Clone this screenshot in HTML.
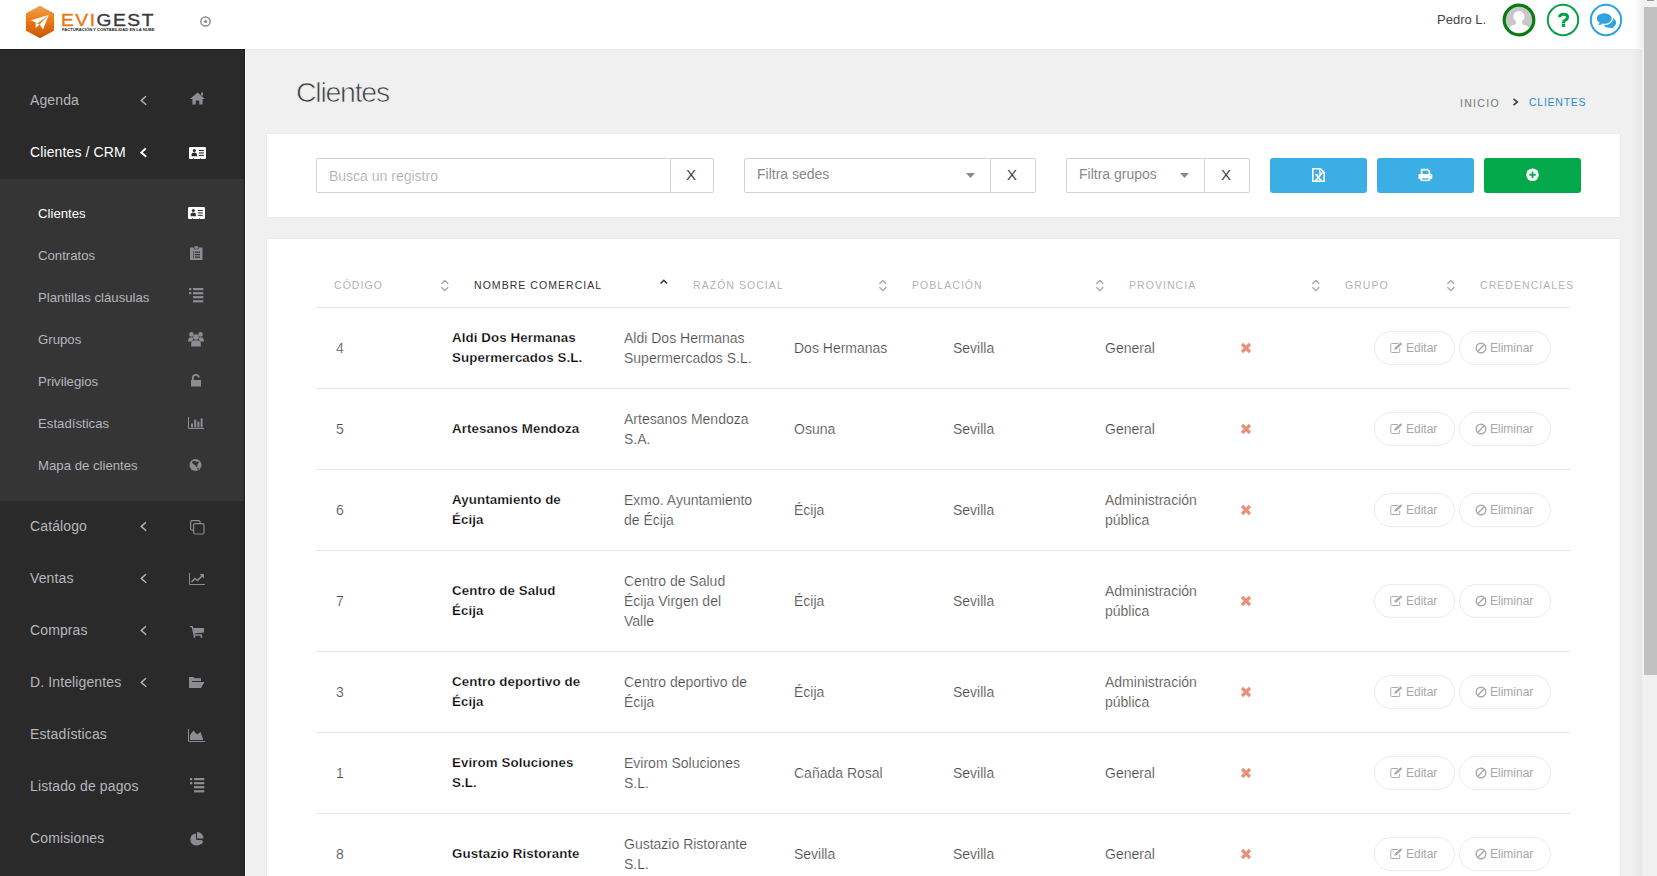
<!DOCTYPE html>
<html><head><meta charset="utf-8">
<style>
*{box-sizing:border-box;margin:0;padding:0}
html,body{width:1657px;height:876px;overflow:hidden;background:#f0f0f0;font-family:"Liberation Sans",sans-serif}
.abs{position:absolute;display:block}
.t{position:absolute;white-space:nowrap}
</style></head><body>

<div class="abs" style="left:246px;top:49px;width:1396px;height:827px;background:#f0f0f0"></div>
<div class="abs" style="left:246px;top:49px;width:1396px;height:1px;background:#e8e8e8"></div>
<div class="abs" style="left:0;top:0;width:1642px;height:49px;background:#fff"></div>
<svg class="abs" style="left:25px;top:5px" width="31" height="34" viewBox="0 0 31 34">
<defs><linearGradient id="lg" x1="0" y1="0" x2="0" y2="1"><stop offset="0" stop-color="#eea050"/><stop offset="0.25" stop-color="#ec8a28"/><stop offset="0.55" stop-color="#e57510"/><stop offset="1" stop-color="#c85808"/></linearGradient></defs>
<path d="M15 2 L28 9 L28 25 L15 32 L2 25 L2 9 Z" fill="url(#lg)" stroke="url(#lg)" stroke-width="2.2" stroke-linejoin="round"/>
<path d="M6.1 15.3 L23.9 9.8 L18 24.4 L14.6 19.6 Z" fill="#fff"/><path d="M10.6 18 L14.6 19.6 L10.8 23 Z" fill="#fff"/><path d="M23.9 9.8 L12.3 18.4 L14.6 19.6 Z" fill="#e88428"/>
</svg>
<div class="t" style="left:61px;top:10px;font-size:16.5px;letter-spacing:1.3px;line-height:20px;transform:scaleX(1.165);transform-origin:0 0;color:#e8780e;-webkit-text-stroke:0.35px #e8780e">EVI<span style="color:#3a3a40;-webkit-text-stroke:0.35px #3a3a40">GEST</span></div>
<div class="t" style="left:62px;top:27.3px;font-size:4.15px;font-weight:bold;line-height:6px;color:#222">FACTURACIÓN Y CONTABILIDAD EN LA NUBE</div>
<svg class="abs" style="left:199px;top:15px" width="13" height="13" viewBox="0 0 13 13"><circle cx="6.5" cy="6.5" r="4.6" fill="none" stroke="#8a8a8a" stroke-width="1.5"/><circle cx="6.5" cy="6.5" r="1.6" fill="#8a8a8a"/></svg>
<div class="t" style="left:1437px;top:12px;font-size:13px;line-height:16px;color:#444">Pedro L.</div>
<svg class="abs" style="left:1502px;top:3px" width="34" height="34" viewBox="0 0 34 34"><defs><clipPath id="cp"><circle cx="17" cy="17" r="14"/></clipPath></defs>
<circle cx="17" cy="17" r="14.5" fill="#c8c8c8"/>
<g clip-path="url(#cp)"><circle cx="17" cy="13.4" r="5.5" fill="#fff"/><path d="M14.2 17.5 L19.8 17.5 L20.5 21.5 Q27 22.5 29 28 L29 34 L5 34 L5 28 Q7 22.5 13.5 21.5 Z" fill="#fff"/></g>
<circle cx="17" cy="17" r="14.8" fill="none" stroke="#0a7a12" stroke-width="3.2"/></svg>
<svg class="abs" style="left:1546px;top:3px" width="34" height="34" viewBox="0 0 34 34"><circle cx="17" cy="17" r="15.2" fill="#fff" stroke="#08a04a" stroke-width="2"/>
<path d="M13.7 14.3 Q13.7 11.3 17.6 11.3 Q21.5 11.3 21.5 14 Q21.5 16 19.3 17.1 Q17.6 17.9 17.6 19.4 L17.6 20" fill="none" stroke="#08a04a" stroke-width="3.1"/><rect x="15.9" y="20.6" width="3.3" height="3.3" fill="#08a04a"/></svg>
<svg class="abs" style="left:1589px;top:3px" width="34" height="34" viewBox="0 0 34 34"><circle cx="17" cy="17" r="15.2" fill="#fff" stroke="#2ea3e0" stroke-width="2"/>
<ellipse cx="20.6" cy="19.6" rx="6.6" ry="5.2" fill="#2ea3e0"/><path d="M22.5 23 L25.6 25.4 L19.5 24.2 Z" fill="#2ea3e0"/><ellipse cx="15.2" cy="15.5" rx="8.2" ry="5.9" fill="#2ea3e0" stroke="#fff" stroke-width="1.3"/><path d="M9 22.3 L10.9 19.6 L14.3 21 Z" fill="#2ea3e0"/></svg>
<div class="abs" style="left:0;top:49px;width:245px;height:827px;background:#2a2a2a"></div>
<div class="abs" style="left:0;top:49px;width:245px;height:1px;background:#1c1c1c"></div>
<div class="abs" style="left:0;top:179px;width:244px;height:322px;background:#353535"></div>
<div class="abs" style="left:244px;top:49px;width:1px;height:827px;background:rgba(0,0,0,0.3)"></div>
<div class="abs" style="left:245px;top:49px;width:1px;height:827px;background:#fcfcfc"></div>
<div class="t" style="left:30px;top:92px;font-size:14px;letter-spacing:0.12px;line-height:16px;color:#b6b6be">Agenda</div>
<svg class="abs" style="left:140px;top:95px" width="8" height="11" viewBox="0 0 8 11" ><path d="M5.9 1.2 L1.3 5.5 L6.2 9.7" fill="none" stroke="#b4b4bc" stroke-width="1.5"/></svg>
<svg class="abs" style="left:190px;top:92px" width="15" height="13" viewBox="0 0 15 13" ><path d="M7.5 0.5 L15 7 L12.6 7 L12.6 12.5 L9.2 12.5 L9.2 8.5 L5.8 8.5 L5.8 12.5 L2.4 12.5 L2.4 7 L0 7 Z" fill="#8c8c94"/><rect x="11" y="0.5" width="2" height="3" fill="#8c8c94"/></svg>
<div class="t" style="left:30px;top:144px;font-size:14px;letter-spacing:0.12px;line-height:16px;color:#fff">Clientes / CRM</div>
<svg class="abs" style="left:140px;top:147px" width="8" height="11" viewBox="0 0 8 11" ><path d="M5.9 1.2 L1.3 5.5 L6.2 9.7" fill="none" stroke="#fff" stroke-width="1.9"/></svg>
<svg class="abs" style="left:188.5px;top:147px" width="17" height="12" viewBox="0 0 17 12" ><rect x="0" y="0" width="17" height="12" rx="1.2" fill="#fff"/><circle cx="5.3" cy="3.6" r="1.5" fill="#2a2a2a"/><path d="M2.6 9.3 L2.6 7.4 Q2.6 5.6 5.3 5.6 Q8 5.6 8 7.4 L8 9.3 Z" fill="#2a2a2a"/><rect x="9.8" y="3" width="5" height="1.1" fill="#2a2a2a"/><rect x="9.8" y="5.4" width="5" height="1.1" fill="#2a2a2a"/><rect x="9.8" y="7.8" width="5" height="1.1" fill="#2a2a2a"/><rect x="4" y="11.2" width="0.8" height="0.8" fill="#2a2a2a"/><rect x="11" y="11.2" width="0.8" height="0.8" fill="#2a2a2a"/></svg>
<div class="t" style="left:38px;top:206px;font-size:13.2px;line-height:16px;color:#fff">Clientes</div>
<div class="t" style="left:38px;top:248px;font-size:13.2px;line-height:16px;color:#b6b6be">Contratos</div>
<div class="t" style="left:38px;top:290px;font-size:13.2px;line-height:16px;color:#b6b6be">Plantillas cláusulas</div>
<div class="t" style="left:38px;top:332px;font-size:13.2px;line-height:16px;color:#b6b6be">Grupos</div>
<div class="t" style="left:38px;top:374px;font-size:13.2px;line-height:16px;color:#b6b6be">Privilegios</div>
<div class="t" style="left:38px;top:416px;font-size:13.2px;line-height:16px;color:#b6b6be">Estadísticas</div>
<div class="t" style="left:38px;top:458px;font-size:13.2px;line-height:16px;color:#b6b6be">Mapa de clientes</div>
<svg class="abs" style="left:187.5px;top:207px" width="17" height="12" viewBox="0 0 17 12" ><rect x="0" y="0" width="17" height="12" rx="1.2" fill="#fff"/><circle cx="5.3" cy="3.6" r="1.5" fill="#353535"/><path d="M2.6 9.3 L2.6 7.4 Q2.6 5.6 5.3 5.6 Q8 5.6 8 7.4 L8 9.3 Z" fill="#353535"/><rect x="9.8" y="3" width="5" height="1.1" fill="#353535"/><rect x="9.8" y="5.4" width="5" height="1.1" fill="#353535"/><rect x="9.8" y="7.8" width="5" height="1.1" fill="#353535"/><rect x="4" y="11.2" width="0.8" height="0.8" fill="#353535"/><rect x="11" y="11.2" width="0.8" height="0.8" fill="#353535"/></svg>
<svg class="abs" style="left:190px;top:246px" width="13" height="14" viewBox="0 0 13 14" ><rect x="0" y="1.5" width="12.5" height="12.5" rx="0.5" fill="#8c8c94"/><rect x="4" y="0" width="4.5" height="3" fill="#8c8c94" stroke="#353535" stroke-width="0.6"/><rect x="3" y="5.5" width="1.3" height="1.3" fill="#353535"/><rect x="5" y="5.5" width="5" height="1.3" fill="#353535"/><rect x="3" y="8" width="1.3" height="1.3" fill="#353535"/><rect x="5" y="8" width="5" height="1.3" fill="#353535"/><rect x="3" y="10.5" width="1.3" height="1.3" fill="#353535"/><rect x="5" y="10.5" width="5" height="1.3" fill="#353535"/></svg>
<svg class="abs" style="left:189px;top:288px" width="15" height="15" viewBox="0 0 15 15" ><rect x="0" y="0" width="2.3" height="2.2" fill="#8c8c94"/><rect x="0" y="4" width="2.3" height="2.2" fill="#8c8c94"/><rect x="4" y="0" width="10.3" height="2.2" fill="#8c8c94"/><rect x="4" y="4.1" width="10.3" height="2.2" fill="#8c8c94"/><rect x="4" y="8.1" width="10.3" height="2.2" fill="#8c8c94"/><rect x="4" y="12.2" width="10.3" height="2.2" fill="#8c8c94"/></svg>
<svg class="abs" style="left:188px;top:332px" width="16" height="15" viewBox="0 0 16 15" ><circle cx="3.4" cy="2.4" r="2.3" fill="#8c8c94"/><circle cx="12.6" cy="2.4" r="2.3" fill="#8c8c94"/><path d="M0 9 Q0 5.2 3.4 5.2 Q5 5.2 5.5 6.5 L4 9.5 L0 9.5Z" fill="#8c8c94"/><path d="M16 9 Q16 5.2 12.6 5.2 Q11 5.2 10.5 6.5 L12 9.5 L16 9.5Z" fill="#8c8c94"/><circle cx="8" cy="5" r="2.8" fill="#8c8c94"/><path d="M3.2 14.5 L3.2 11.5 Q3.2 8.3 8 8.3 Q12.8 8.3 12.8 11.5 L12.8 14.5 Z" fill="#8c8c94"/></svg>
<svg class="abs" style="left:191px;top:374px" width="11" height="13" viewBox="0 0 11 13" ><path d="M1.8 6 L1.8 3.8 Q1.8 0.9 4.8 0.9 Q7.8 0.9 7.8 3.5" fill="none" stroke="#8c8c94" stroke-width="1.8"/><rect x="0" y="6" width="10" height="6.5" fill="#8c8c94"/></svg>
<svg class="abs" style="left:188px;top:417px" width="16" height="12" viewBox="0 0 16 12" ><path d="M0.5 0 L0.5 11.5 L16 11.5" fill="none" stroke="#8c8c94" stroke-width="1"/><rect x="3" y="6.5" width="2" height="4" fill="#8c8c94"/><rect x="6.2" y="2.5" width="2" height="8" fill="#8c8c94"/><rect x="9.4" y="4.5" width="2" height="6" fill="#8c8c94"/><rect x="12.6" y="1.5" width="2" height="9" fill="#8c8c94"/></svg>
<svg class="abs" style="left:189px;top:459px" width="13" height="12" viewBox="0 0 13 12" ><circle cx="6.5" cy="6" r="6" fill="#8c8c94"/><path d="M2.8 2.9 Q4.8 1.6 6.6 2.3 L7.5 3.1 L8.6 2.3 L10.2 2.9 L8.8 4.8 L7.9 8.6 L6.4 6.6 L4.2 5.1 Z" fill="#353535"/><circle cx="9" cy="9.7" r="0.9" fill="#353535"/></svg>
<div class="t" style="left:30px;top:518px;font-size:14px;letter-spacing:0.12px;line-height:16px;color:#b6b6be">Catálogo</div>
<svg class="abs" style="left:140px;top:521px" width="8" height="11" viewBox="0 0 8 11" ><path d="M5.9 1.2 L1.3 5.5 L6.2 9.7" fill="none" stroke="#b4b4bc" stroke-width="1.5"/></svg>
<svg class="abs" style="left:190px;top:520px" width="15" height="15" viewBox="0 0 15 15" ><rect x="0.6" y="0.6" width="9.5" height="9.5" rx="1.5" fill="none" stroke="#8c8c94" stroke-width="1.2"/><rect x="3.6" y="3.6" width="10.4" height="10.4" rx="1.5" fill="#2a2a2a" stroke="#8c8c94" stroke-width="1.2"/></svg>
<div class="t" style="left:30px;top:570px;font-size:14px;letter-spacing:0.12px;line-height:16px;color:#b6b6be">Ventas</div>
<svg class="abs" style="left:140px;top:573px" width="8" height="11" viewBox="0 0 8 11" ><path d="M5.9 1.2 L1.3 5.5 L6.2 9.7" fill="none" stroke="#b4b4bc" stroke-width="1.5"/></svg>
<svg class="abs" style="left:189px;top:573px" width="16" height="12" viewBox="0 0 16 12" ><path d="M0.5 0 L0.5 11.5 L16 11.5" fill="none" stroke="#8c8c94" stroke-width="1"/><path d="M2.5 9 L6 5.5 L8.5 7.5 L13 3" fill="none" stroke="#8c8c94" stroke-width="1.6"/><path d="M10.5 1 L15 1 L15 5.5 Z" fill="#8c8c94"/></svg>
<div class="t" style="left:30px;top:622px;font-size:14px;letter-spacing:0.12px;line-height:16px;color:#b6b6be">Compras</div>
<svg class="abs" style="left:140px;top:625px" width="8" height="11" viewBox="0 0 8 11" ><path d="M5.9 1.2 L1.3 5.5 L6.2 9.7" fill="none" stroke="#b4b4bc" stroke-width="1.5"/></svg>
<svg class="abs" style="left:190px;top:626px" width="14" height="12" viewBox="0 0 14 12" ><path d="M0 0.7 L2.2 0.7 L4.2 9 L12 9" fill="none" stroke="#8c8c94" stroke-width="1.3"/><path d="M3 2 L14 2 L14 6.5 L4.2 7.5 Z" fill="#8c8c94"/><rect x="3.5" y="9.5" width="1.8" height="2.2" fill="#8c8c94"/><rect x="10.5" y="9.5" width="1.8" height="2.2" fill="#8c8c94"/></svg>
<div class="t" style="left:30px;top:674px;font-size:14px;letter-spacing:0.12px;line-height:16px;color:#b6b6be">D. Inteligentes</div>
<svg class="abs" style="left:140px;top:677px" width="8" height="11" viewBox="0 0 8 11" ><path d="M5.9 1.2 L1.3 5.5 L6.2 9.7" fill="none" stroke="#b4b4bc" stroke-width="1.5"/></svg>
<svg class="abs" style="left:189px;top:677px" width="16" height="12" viewBox="0 0 16 12" ><path d="M0 1 L0 11 L12 11 L15.5 5 L3.5 5 Z" fill="#8c8c94"/><path d="M0 9 L0 0 L4.5 0 L5.5 1.3 L12 1.3 L12 4 L3 4 L0 9 Z" fill="#8c8c94"/></svg>
<div class="t" style="left:30px;top:726px;font-size:14px;letter-spacing:0.12px;line-height:16px;color:#b6b6be">Estadísticas</div>
<svg class="abs" style="left:188px;top:729px" width="17" height="13" viewBox="0 0 17 13" ><path d="M0.5 0 L0.5 12.5 L17 12.5" fill="none" stroke="#8c8c94" stroke-width="1"/><path d="M2 11 L2 6 L5.5 1.5 L9 5.5 L12.5 3 L15 10 L15 11 Z" fill="#8c8c94"/></svg>
<div class="t" style="left:30px;top:778px;font-size:14px;letter-spacing:0.12px;line-height:16px;color:#b6b6be">Listado de pagos</div>
<svg class="abs" style="left:190px;top:778px" width="15" height="15" viewBox="0 0 15 15" ><rect x="0" y="0" width="2.3" height="2.2" fill="#8c8c94"/><rect x="0" y="4" width="2.3" height="2.2" fill="#8c8c94"/><rect x="4" y="0" width="10.3" height="2.2" fill="#8c8c94"/><rect x="4" y="4.1" width="10.3" height="2.2" fill="#8c8c94"/><rect x="4" y="8.1" width="10.3" height="2.2" fill="#8c8c94"/><rect x="4" y="12.2" width="10.3" height="2.2" fill="#8c8c94"/></svg>
<div class="t" style="left:30px;top:830px;font-size:14px;letter-spacing:0.12px;line-height:16px;color:#b6b6be">Comisiones</div>
<svg class="abs" style="left:190px;top:832px" width="14" height="14" viewBox="0 0 14 14" ><path d="M6 1.5 L6 7.8 L12.2 8.2 Q11.8 13.5 6.2 13.6 Q0.5 13.2 0.3 7.6 Q0.6 2 6 1.5 Z" fill="#8c8c94"/><path d="M7 0 Q13 0.2 13.6 6.6 L7 6.6 Z" fill="#8c8c94"/><path d="M7.6 8.6 L13 8.8 Q12.8 11 11.3 12.4 Z" fill="#8c8c94"/></svg>
<div class="t" style="left:296px;top:74px;font-size:28.5px;letter-spacing:-1.25px;line-height:36px;color:#3a3a3a;-webkit-text-stroke:0.7px #f0f0f0">Clientes</div>
<div class="t" style="left:1460px;top:97px;font-size:10.5px;letter-spacing:1.3px;line-height:12px;color:#777">INICIO</div>
<svg class="abs" style="left:1512px;top:98px" width="7" height="8" viewBox="0 0 7 8" ><path d="M1.5 0.8 L5.3 4 L1.5 7.2" fill="none" stroke="#444" stroke-width="1.7"/></svg>
<div class="t" style="left:1529px;top:96px;font-size:10.5px;letter-spacing:0.75px;line-height:12px;color:#2b8ccb">CLIENTES</div>
<div class="abs" style="left:266px;top:133px;width:1355px;height:85px;background:#fff;border:1px solid #ebebeb"></div>
<div class="abs" style="left:266px;top:238px;width:1355px;height:700px;background:#fff;border:1px solid #ebebeb"></div>
<div class="abs" style="left:316px;top:158px;width:355px;height:35px;border:1px solid #d2d2d2;border-radius:2px 0 0 2px;background:#fff"></div>
<div class="abs" style="left:670px;top:158px;width:44px;height:35px;border:1px solid #d2d2d2;border-radius:0 2px 2px 0;background:#fff"></div>
<div class="t" style="left:329px;top:168px;font-size:14px;line-height:16px;color:#aaa;-webkit-text-stroke:0.2px #fff">Busca un registro</div>
<div class="t" style="left:686px;top:167px;font-size:15px;line-height:16px;color:#444">X</div>
<div class="abs" style="left:744px;top:158px;width:247px;height:35px;border:1px solid #d2d2d2;border-radius:2px 0 0 2px;background:#fff"></div>
<div class="abs" style="left:990px;top:158px;width:46px;height:35px;border:1px solid #d2d2d2;border-radius:0 2px 2px 0;background:#fff"></div>
<div class="t" style="left:757px;top:166px;font-size:14px;line-height:16px;color:#888">Filtra sedes</div>
<svg class="abs" style="left:966px;top:173px" width="9" height="5" viewBox="0 0 9 5" ><path d="M0 0 L9 0 L4.5 5 Z" fill="#888"/></svg>
<div class="t" style="left:1007px;top:167px;font-size:15px;line-height:16px;color:#444">X</div>
<div class="abs" style="left:1066px;top:158px;width:139px;height:35px;border:1px solid #d2d2d2;border-radius:2px 0 0 2px;background:#fff"></div>
<div class="abs" style="left:1204px;top:158px;width:46px;height:35px;border:1px solid #d2d2d2;border-radius:0 2px 2px 0;background:#fff"></div>
<div class="t" style="left:1079px;top:166px;font-size:14px;line-height:16px;color:#888">Filtra grupos</div>
<svg class="abs" style="left:1180px;top:173px" width="9" height="5" viewBox="0 0 9 5" ><path d="M0 0 L9 0 L4.5 5 Z" fill="#888"/></svg>
<div class="t" style="left:1221px;top:167px;font-size:15px;line-height:16px;color:#444">X</div>
<div class="abs" style="left:1270px;top:158px;width:97px;height:35px;border-radius:3px;background:#3aaee5"></div>
<div class="abs" style="left:1377px;top:158px;width:97px;height:35px;border-radius:3px;background:#3aaee5"></div>
<div class="abs" style="left:1484px;top:158px;width:97px;height:35px;border-radius:3px;background:#03a84a"></div>
<svg class="abs" style="left:1312px;top:168px" width="13" height="14" viewBox="0 0 13 14" ><path d="M0.8 0.8 L8.3 0.8 L12.2 4.7 L12.2 13.2 L0.8 13.2 Z" fill="none" stroke="#fff" stroke-width="1.6"/><path d="M7.8 0.8 L7.8 5.2 L12.2 5.2" fill="none" stroke="#fff" stroke-width="1.2"/><path d="M4.2 6.6 L8.6 12 M8.6 6.6 L4.2 12" stroke="#fff" stroke-width="1.7"/><rect x="3" y="6" width="2.6" height="1" fill="#fff"/><rect x="7.3" y="6" width="2.6" height="1" fill="#fff"/><rect x="3" y="11.6" width="2.6" height="1" fill="#fff"/><rect x="7.3" y="11.6" width="2.6" height="1" fill="#fff"/></svg>
<svg class="abs" style="left:1418px;top:168px" width="15" height="14" viewBox="0 0 15 14" ><path d="M3.6 6.2 L3.6 1.6 L9.6 1.6 L11.4 3.4 L11.4 6.2" fill="none" stroke="#fff" stroke-width="1.6"/><rect x="0.4" y="6" width="13.9" height="4.9" rx="1" fill="#fff"/><rect x="2.6" y="10.3" width="9.6" height="2.8" fill="#fff"/><rect x="4.2" y="10.4" width="6.4" height="1.3" fill="#3aaee5"/><circle cx="12.4" cy="7.4" r="0.5" fill="#3aaee5"/></svg>
<svg class="abs" style="left:1526px;top:168px" width="13" height="13" viewBox="0 0 13 13" ><circle cx="6.5" cy="6.8" r="6.3" fill="#fff"/><rect x="3.3" y="5.9" width="6.4" height="1.8" fill="#03a84a"/><rect x="5.6" y="3.6" width="1.8" height="6.4" fill="#03a84a"/></svg>
<div class="t" style="left:334px;top:279px;font-size:10.5px;letter-spacing:1.05px;line-height:12px;color:#b3b3b3">CÓDIGO</div>
<svg class="abs" style="left:441px;top:280px" width="8" height="12" viewBox="0 0 8 12" ><path d="M0.4 3.8 L3.8 0.5 L7.2 3.8 M0.4 7.3 L3.8 10.6 L7.2 7.3" fill="none" stroke="#a2a2a6" stroke-width="1.25"/></svg>
<div class="t" style="left:474px;top:279px;font-size:10.5px;letter-spacing:1.05px;line-height:12px;color:#333">NOMBRE COMERCIAL</div>
<svg class="abs" style="left:660px;top:279px" width="8" height="6" viewBox="0 0 8 6" ><path d="M0.6 4.6 L3.8 1.3 L7 4.6" fill="none" stroke="#333" stroke-width="1.5"/></svg>
<div class="t" style="left:693px;top:279px;font-size:10.5px;letter-spacing:1.05px;line-height:12px;color:#b3b3b3">RAZÓN SOCIAL</div>
<svg class="abs" style="left:879px;top:280px" width="8" height="12" viewBox="0 0 8 12" ><path d="M0.4 3.8 L3.8 0.5 L7.2 3.8 M0.4 7.3 L3.8 10.6 L7.2 7.3" fill="none" stroke="#a2a2a6" stroke-width="1.25"/></svg>
<div class="t" style="left:912px;top:279px;font-size:10.5px;letter-spacing:1.05px;line-height:12px;color:#b3b3b3">POBLACIÓN</div>
<svg class="abs" style="left:1096px;top:280px" width="8" height="12" viewBox="0 0 8 12" ><path d="M0.4 3.8 L3.8 0.5 L7.2 3.8 M0.4 7.3 L3.8 10.6 L7.2 7.3" fill="none" stroke="#a2a2a6" stroke-width="1.25"/></svg>
<div class="t" style="left:1129px;top:279px;font-size:10.5px;letter-spacing:1.05px;line-height:12px;color:#b3b3b3">PROVINCIA</div>
<svg class="abs" style="left:1312px;top:280px" width="8" height="12" viewBox="0 0 8 12" ><path d="M0.4 3.8 L3.8 0.5 L7.2 3.8 M0.4 7.3 L3.8 10.6 L7.2 7.3" fill="none" stroke="#a2a2a6" stroke-width="1.25"/></svg>
<div class="t" style="left:1345px;top:279px;font-size:10.5px;letter-spacing:1.05px;line-height:12px;color:#b3b3b3">GRUPO</div>
<svg class="abs" style="left:1447px;top:280px" width="8" height="12" viewBox="0 0 8 12" ><path d="M0.4 3.8 L3.8 0.5 L7.2 3.8 M0.4 7.3 L3.8 10.6 L7.2 7.3" fill="none" stroke="#a2a2a6" stroke-width="1.25"/></svg>
<div class="t" style="left:1480px;top:279px;font-size:10.5px;letter-spacing:1.05px;line-height:12px;color:#b3b3b3">CREDENCIALES</div>
<div class="abs" style="left:316px;top:307px;width:1255px;height:1px;background:#e6e6e6"></div>
<div class="abs" style="left:316px;top:388px;width:1255px;height:1px;background:#e6e6e6"></div>
<div class="abs" style="left:316px;top:469px;width:1255px;height:1px;background:#e6e6e6"></div>
<div class="abs" style="left:316px;top:550px;width:1255px;height:1px;background:#e6e6e6"></div>
<div class="abs" style="left:316px;top:651px;width:1255px;height:1px;background:#e6e6e6"></div>
<div class="abs" style="left:316px;top:732px;width:1255px;height:1px;background:#e6e6e6"></div>
<div class="abs" style="left:316px;top:813px;width:1255px;height:1px;background:#e6e6e6"></div>
<div class="t" style="left:336px;top:338px;line-height:20px;font-size:14px;color:#4a4a4a;-webkit-text-stroke:0.2px #fff">4</div>
<div class="t" style="left:452px;top:328px;line-height:20px;font-size:13.3px;font-weight:bold;color:#000;-webkit-text-stroke:0.25px #fff;letter-spacing:0.1px">Aldi Dos Hermanas<br>Supermercados S.L.</div>
<div class="t" style="left:624px;top:328px;line-height:20px;font-size:14px;color:#4a4a4a;-webkit-text-stroke:0.2px #fff">Aldi Dos Hermanas<br>Supermercados S.L.</div>
<div class="t" style="left:794px;top:338px;line-height:20px;font-size:14px;color:#4a4a4a;-webkit-text-stroke:0.2px #fff">Dos Hermanas</div>
<div class="t" style="left:953px;top:338px;line-height:20px;font-size:14px;color:#4a4a4a;-webkit-text-stroke:0.2px #fff">Sevilla</div>
<div class="t" style="left:1105px;top:338px;line-height:20px;font-size:14px;color:#4a4a4a;-webkit-text-stroke:0.2px #fff">General</div>
<svg class="abs" style="left:1240px;top:342px" width="12" height="12" viewBox="0 0 12 12" ><path d="M2 2 L10 10 M10 2 L2 10" stroke="#e8917a" stroke-width="3.2" stroke-linecap="butt"/></svg>
<div class="abs" style="left:1374px;top:331px;width:81px;height:34px;border:1px solid #ececec;border-radius:17px"></div>
<svg class="abs" style="left:1390px;top:342px" width="13" height="12" viewBox="0 0 13 12" ><path d="M8 1.5 L1.5 1.5 Q0.8 1.5 0.8 2.2 L0.8 9.8 Q0.8 10.5 1.5 10.5 L9 10.5 Q9.7 10.5 9.7 9.8 L9.7 6.5" fill="none" stroke="#ababab" stroke-width="1"/><path d="M4.3 7.8 L4.8 5.6 L10.6 0.2 L12.3 1.9 L6.6 7.3 Z" fill="#ababab"/></svg>
<div class="t" style="left:1406px;top:340px;font-size:12px;line-height:16px;color:#a8a8a8">Editar</div>
<div class="abs" style="left:1459px;top:331px;width:92px;height:34px;border:1px solid #ececec;border-radius:17px"></div>
<svg class="abs" style="left:1475px;top:342px" width="12" height="12" viewBox="0 0 12 12" ><circle cx="6" cy="6" r="4.8" fill="none" stroke="#aaa" stroke-width="1.5"/><path d="M2.8 9.2 L9.2 2.8" stroke="#aaa" stroke-width="1.5"/></svg>
<div class="t" style="left:1490px;top:340px;font-size:12px;line-height:16px;color:#a8a8a8">Eliminar</div>
<div class="t" style="left:336px;top:419px;line-height:20px;font-size:14px;color:#4a4a4a;-webkit-text-stroke:0.2px #fff">5</div>
<div class="t" style="left:452px;top:419px;line-height:20px;font-size:13.3px;font-weight:bold;color:#000;-webkit-text-stroke:0.25px #fff;letter-spacing:0.1px">Artesanos Mendoza</div>
<div class="t" style="left:624px;top:409px;line-height:20px;font-size:14px;color:#4a4a4a;-webkit-text-stroke:0.2px #fff">Artesanos Mendoza<br>S.A.</div>
<div class="t" style="left:794px;top:419px;line-height:20px;font-size:14px;color:#4a4a4a;-webkit-text-stroke:0.2px #fff">Osuna</div>
<div class="t" style="left:953px;top:419px;line-height:20px;font-size:14px;color:#4a4a4a;-webkit-text-stroke:0.2px #fff">Sevilla</div>
<div class="t" style="left:1105px;top:419px;line-height:20px;font-size:14px;color:#4a4a4a;-webkit-text-stroke:0.2px #fff">General</div>
<svg class="abs" style="left:1240px;top:423px" width="12" height="12" viewBox="0 0 12 12" ><path d="M2 2 L10 10 M10 2 L2 10" stroke="#e8917a" stroke-width="3.2" stroke-linecap="butt"/></svg>
<div class="abs" style="left:1374px;top:412px;width:81px;height:34px;border:1px solid #ececec;border-radius:17px"></div>
<svg class="abs" style="left:1390px;top:423px" width="13" height="12" viewBox="0 0 13 12" ><path d="M8 1.5 L1.5 1.5 Q0.8 1.5 0.8 2.2 L0.8 9.8 Q0.8 10.5 1.5 10.5 L9 10.5 Q9.7 10.5 9.7 9.8 L9.7 6.5" fill="none" stroke="#ababab" stroke-width="1"/><path d="M4.3 7.8 L4.8 5.6 L10.6 0.2 L12.3 1.9 L6.6 7.3 Z" fill="#ababab"/></svg>
<div class="t" style="left:1406px;top:421px;font-size:12px;line-height:16px;color:#a8a8a8">Editar</div>
<div class="abs" style="left:1459px;top:412px;width:92px;height:34px;border:1px solid #ececec;border-radius:17px"></div>
<svg class="abs" style="left:1475px;top:423px" width="12" height="12" viewBox="0 0 12 12" ><circle cx="6" cy="6" r="4.8" fill="none" stroke="#aaa" stroke-width="1.5"/><path d="M2.8 9.2 L9.2 2.8" stroke="#aaa" stroke-width="1.5"/></svg>
<div class="t" style="left:1490px;top:421px;font-size:12px;line-height:16px;color:#a8a8a8">Eliminar</div>
<div class="t" style="left:336px;top:500px;line-height:20px;font-size:14px;color:#4a4a4a;-webkit-text-stroke:0.2px #fff">6</div>
<div class="t" style="left:452px;top:490px;line-height:20px;font-size:13.3px;font-weight:bold;color:#000;-webkit-text-stroke:0.25px #fff;letter-spacing:0.1px">Ayuntamiento de<br>Écija</div>
<div class="t" style="left:624px;top:490px;line-height:20px;font-size:14px;color:#4a4a4a;-webkit-text-stroke:0.2px #fff">Exmo. Ayuntamiento<br>de Écija</div>
<div class="t" style="left:794px;top:500px;line-height:20px;font-size:14px;color:#4a4a4a;-webkit-text-stroke:0.2px #fff">Écija</div>
<div class="t" style="left:953px;top:500px;line-height:20px;font-size:14px;color:#4a4a4a;-webkit-text-stroke:0.2px #fff">Sevilla</div>
<div class="t" style="left:1105px;top:490px;line-height:20px;font-size:14px;color:#4a4a4a;-webkit-text-stroke:0.2px #fff">Administración<br>pública</div>
<svg class="abs" style="left:1240px;top:504px" width="12" height="12" viewBox="0 0 12 12" ><path d="M2 2 L10 10 M10 2 L2 10" stroke="#e8917a" stroke-width="3.2" stroke-linecap="butt"/></svg>
<div class="abs" style="left:1374px;top:493px;width:81px;height:34px;border:1px solid #ececec;border-radius:17px"></div>
<svg class="abs" style="left:1390px;top:504px" width="13" height="12" viewBox="0 0 13 12" ><path d="M8 1.5 L1.5 1.5 Q0.8 1.5 0.8 2.2 L0.8 9.8 Q0.8 10.5 1.5 10.5 L9 10.5 Q9.7 10.5 9.7 9.8 L9.7 6.5" fill="none" stroke="#ababab" stroke-width="1"/><path d="M4.3 7.8 L4.8 5.6 L10.6 0.2 L12.3 1.9 L6.6 7.3 Z" fill="#ababab"/></svg>
<div class="t" style="left:1406px;top:502px;font-size:12px;line-height:16px;color:#a8a8a8">Editar</div>
<div class="abs" style="left:1459px;top:493px;width:92px;height:34px;border:1px solid #ececec;border-radius:17px"></div>
<svg class="abs" style="left:1475px;top:504px" width="12" height="12" viewBox="0 0 12 12" ><circle cx="6" cy="6" r="4.8" fill="none" stroke="#aaa" stroke-width="1.5"/><path d="M2.8 9.2 L9.2 2.8" stroke="#aaa" stroke-width="1.5"/></svg>
<div class="t" style="left:1490px;top:502px;font-size:12px;line-height:16px;color:#a8a8a8">Eliminar</div>
<div class="t" style="left:336px;top:591px;line-height:20px;font-size:14px;color:#4a4a4a;-webkit-text-stroke:0.2px #fff">7</div>
<div class="t" style="left:452px;top:581px;line-height:20px;font-size:13.3px;font-weight:bold;color:#000;-webkit-text-stroke:0.25px #fff;letter-spacing:0.1px">Centro de Salud<br>Écija</div>
<div class="t" style="left:624px;top:571px;line-height:20px;font-size:14px;color:#4a4a4a;-webkit-text-stroke:0.2px #fff">Centro de Salud<br>Écija Virgen del<br>Valle</div>
<div class="t" style="left:794px;top:591px;line-height:20px;font-size:14px;color:#4a4a4a;-webkit-text-stroke:0.2px #fff">Écija</div>
<div class="t" style="left:953px;top:591px;line-height:20px;font-size:14px;color:#4a4a4a;-webkit-text-stroke:0.2px #fff">Sevilla</div>
<div class="t" style="left:1105px;top:581px;line-height:20px;font-size:14px;color:#4a4a4a;-webkit-text-stroke:0.2px #fff">Administración<br>pública</div>
<svg class="abs" style="left:1240px;top:595px" width="12" height="12" viewBox="0 0 12 12" ><path d="M2 2 L10 10 M10 2 L2 10" stroke="#e8917a" stroke-width="3.2" stroke-linecap="butt"/></svg>
<div class="abs" style="left:1374px;top:584px;width:81px;height:34px;border:1px solid #ececec;border-radius:17px"></div>
<svg class="abs" style="left:1390px;top:595px" width="13" height="12" viewBox="0 0 13 12" ><path d="M8 1.5 L1.5 1.5 Q0.8 1.5 0.8 2.2 L0.8 9.8 Q0.8 10.5 1.5 10.5 L9 10.5 Q9.7 10.5 9.7 9.8 L9.7 6.5" fill="none" stroke="#ababab" stroke-width="1"/><path d="M4.3 7.8 L4.8 5.6 L10.6 0.2 L12.3 1.9 L6.6 7.3 Z" fill="#ababab"/></svg>
<div class="t" style="left:1406px;top:593px;font-size:12px;line-height:16px;color:#a8a8a8">Editar</div>
<div class="abs" style="left:1459px;top:584px;width:92px;height:34px;border:1px solid #ececec;border-radius:17px"></div>
<svg class="abs" style="left:1475px;top:595px" width="12" height="12" viewBox="0 0 12 12" ><circle cx="6" cy="6" r="4.8" fill="none" stroke="#aaa" stroke-width="1.5"/><path d="M2.8 9.2 L9.2 2.8" stroke="#aaa" stroke-width="1.5"/></svg>
<div class="t" style="left:1490px;top:593px;font-size:12px;line-height:16px;color:#a8a8a8">Eliminar</div>
<div class="t" style="left:336px;top:682px;line-height:20px;font-size:14px;color:#4a4a4a;-webkit-text-stroke:0.2px #fff">3</div>
<div class="t" style="left:452px;top:672px;line-height:20px;font-size:13.3px;font-weight:bold;color:#000;-webkit-text-stroke:0.25px #fff;letter-spacing:0.1px">Centro deportivo de<br>Écija</div>
<div class="t" style="left:624px;top:672px;line-height:20px;font-size:14px;color:#4a4a4a;-webkit-text-stroke:0.2px #fff">Centro deportivo de<br>Écija</div>
<div class="t" style="left:794px;top:682px;line-height:20px;font-size:14px;color:#4a4a4a;-webkit-text-stroke:0.2px #fff">Écija</div>
<div class="t" style="left:953px;top:682px;line-height:20px;font-size:14px;color:#4a4a4a;-webkit-text-stroke:0.2px #fff">Sevilla</div>
<div class="t" style="left:1105px;top:672px;line-height:20px;font-size:14px;color:#4a4a4a;-webkit-text-stroke:0.2px #fff">Administración<br>pública</div>
<svg class="abs" style="left:1240px;top:686px" width="12" height="12" viewBox="0 0 12 12" ><path d="M2 2 L10 10 M10 2 L2 10" stroke="#e8917a" stroke-width="3.2" stroke-linecap="butt"/></svg>
<div class="abs" style="left:1374px;top:675px;width:81px;height:34px;border:1px solid #ececec;border-radius:17px"></div>
<svg class="abs" style="left:1390px;top:686px" width="13" height="12" viewBox="0 0 13 12" ><path d="M8 1.5 L1.5 1.5 Q0.8 1.5 0.8 2.2 L0.8 9.8 Q0.8 10.5 1.5 10.5 L9 10.5 Q9.7 10.5 9.7 9.8 L9.7 6.5" fill="none" stroke="#ababab" stroke-width="1"/><path d="M4.3 7.8 L4.8 5.6 L10.6 0.2 L12.3 1.9 L6.6 7.3 Z" fill="#ababab"/></svg>
<div class="t" style="left:1406px;top:684px;font-size:12px;line-height:16px;color:#a8a8a8">Editar</div>
<div class="abs" style="left:1459px;top:675px;width:92px;height:34px;border:1px solid #ececec;border-radius:17px"></div>
<svg class="abs" style="left:1475px;top:686px" width="12" height="12" viewBox="0 0 12 12" ><circle cx="6" cy="6" r="4.8" fill="none" stroke="#aaa" stroke-width="1.5"/><path d="M2.8 9.2 L9.2 2.8" stroke="#aaa" stroke-width="1.5"/></svg>
<div class="t" style="left:1490px;top:684px;font-size:12px;line-height:16px;color:#a8a8a8">Eliminar</div>
<div class="t" style="left:336px;top:763px;line-height:20px;font-size:14px;color:#4a4a4a;-webkit-text-stroke:0.2px #fff">1</div>
<div class="t" style="left:452px;top:753px;line-height:20px;font-size:13.3px;font-weight:bold;color:#000;-webkit-text-stroke:0.25px #fff;letter-spacing:0.1px">Evirom Soluciones<br>S.L.</div>
<div class="t" style="left:624px;top:753px;line-height:20px;font-size:14px;color:#4a4a4a;-webkit-text-stroke:0.2px #fff">Evirom Soluciones<br>S.L.</div>
<div class="t" style="left:794px;top:763px;line-height:20px;font-size:14px;color:#4a4a4a;-webkit-text-stroke:0.2px #fff">Cañada Rosal</div>
<div class="t" style="left:953px;top:763px;line-height:20px;font-size:14px;color:#4a4a4a;-webkit-text-stroke:0.2px #fff">Sevilla</div>
<div class="t" style="left:1105px;top:763px;line-height:20px;font-size:14px;color:#4a4a4a;-webkit-text-stroke:0.2px #fff">General</div>
<svg class="abs" style="left:1240px;top:767px" width="12" height="12" viewBox="0 0 12 12" ><path d="M2 2 L10 10 M10 2 L2 10" stroke="#e8917a" stroke-width="3.2" stroke-linecap="butt"/></svg>
<div class="abs" style="left:1374px;top:756px;width:81px;height:34px;border:1px solid #ececec;border-radius:17px"></div>
<svg class="abs" style="left:1390px;top:767px" width="13" height="12" viewBox="0 0 13 12" ><path d="M8 1.5 L1.5 1.5 Q0.8 1.5 0.8 2.2 L0.8 9.8 Q0.8 10.5 1.5 10.5 L9 10.5 Q9.7 10.5 9.7 9.8 L9.7 6.5" fill="none" stroke="#ababab" stroke-width="1"/><path d="M4.3 7.8 L4.8 5.6 L10.6 0.2 L12.3 1.9 L6.6 7.3 Z" fill="#ababab"/></svg>
<div class="t" style="left:1406px;top:765px;font-size:12px;line-height:16px;color:#a8a8a8">Editar</div>
<div class="abs" style="left:1459px;top:756px;width:92px;height:34px;border:1px solid #ececec;border-radius:17px"></div>
<svg class="abs" style="left:1475px;top:767px" width="12" height="12" viewBox="0 0 12 12" ><circle cx="6" cy="6" r="4.8" fill="none" stroke="#aaa" stroke-width="1.5"/><path d="M2.8 9.2 L9.2 2.8" stroke="#aaa" stroke-width="1.5"/></svg>
<div class="t" style="left:1490px;top:765px;font-size:12px;line-height:16px;color:#a8a8a8">Eliminar</div>
<div class="t" style="left:336px;top:844px;line-height:20px;font-size:14px;color:#4a4a4a;-webkit-text-stroke:0.2px #fff">8</div>
<div class="t" style="left:452px;top:844px;line-height:20px;font-size:13.3px;font-weight:bold;color:#000;-webkit-text-stroke:0.25px #fff;letter-spacing:0.1px">Gustazio Ristorante</div>
<div class="t" style="left:624px;top:834px;line-height:20px;font-size:14px;color:#4a4a4a;-webkit-text-stroke:0.2px #fff">Gustazio Ristorante<br>S.L.</div>
<div class="t" style="left:794px;top:844px;line-height:20px;font-size:14px;color:#4a4a4a;-webkit-text-stroke:0.2px #fff">Sevilla</div>
<div class="t" style="left:953px;top:844px;line-height:20px;font-size:14px;color:#4a4a4a;-webkit-text-stroke:0.2px #fff">Sevilla</div>
<div class="t" style="left:1105px;top:844px;line-height:20px;font-size:14px;color:#4a4a4a;-webkit-text-stroke:0.2px #fff">General</div>
<svg class="abs" style="left:1240px;top:848px" width="12" height="12" viewBox="0 0 12 12" ><path d="M2 2 L10 10 M10 2 L2 10" stroke="#e8917a" stroke-width="3.2" stroke-linecap="butt"/></svg>
<div class="abs" style="left:1374px;top:837px;width:81px;height:34px;border:1px solid #ececec;border-radius:17px"></div>
<svg class="abs" style="left:1390px;top:848px" width="13" height="12" viewBox="0 0 13 12" ><path d="M8 1.5 L1.5 1.5 Q0.8 1.5 0.8 2.2 L0.8 9.8 Q0.8 10.5 1.5 10.5 L9 10.5 Q9.7 10.5 9.7 9.8 L9.7 6.5" fill="none" stroke="#ababab" stroke-width="1"/><path d="M4.3 7.8 L4.8 5.6 L10.6 0.2 L12.3 1.9 L6.6 7.3 Z" fill="#ababab"/></svg>
<div class="t" style="left:1406px;top:846px;font-size:12px;line-height:16px;color:#a8a8a8">Editar</div>
<div class="abs" style="left:1459px;top:837px;width:92px;height:34px;border:1px solid #ececec;border-radius:17px"></div>
<svg class="abs" style="left:1475px;top:848px" width="12" height="12" viewBox="0 0 12 12" ><circle cx="6" cy="6" r="4.8" fill="none" stroke="#aaa" stroke-width="1.5"/><path d="M2.8 9.2 L9.2 2.8" stroke="#aaa" stroke-width="1.5"/></svg>
<div class="t" style="left:1490px;top:846px;font-size:12px;line-height:16px;color:#a8a8a8">Eliminar</div>
<div class="abs" style="left:1633px;top:50px;width:9px;height:826px;background:linear-gradient(to right,rgba(0,0,0,0),rgba(0,0,0,0.045))"></div>
<div class="abs" style="left:1634px;top:0;width:8px;height:49px;background:linear-gradient(to right,rgba(0,0,0,0),rgba(0,0,0,0.055))"></div>
<div class="abs" style="left:1642px;top:0;width:15px;height:876px;background:#f1f1f1"></div>
<div class="abs" style="left:1644px;top:7px;width:13px;height:668px;background:#c1c1c1"></div>
<div class="abs" style="left:1647px;top:0;width:7px;height:1px;background:#9a9c88"></div>
</body></html>
